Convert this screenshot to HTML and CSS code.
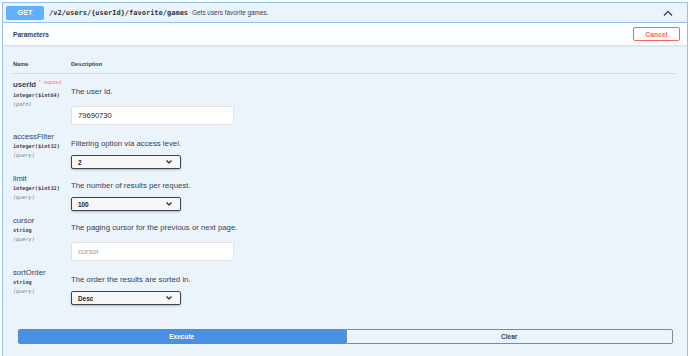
FILE: index.html
```html
<!DOCTYPE html>
<html lang="en">
<head>
    <meta charset="UTF-8">
    <meta name="viewport" content="width=device-width, initial-scale=1.0">
    <title>GET /v2/users/{userId}/favorite/games</title>
    <link rel="stylesheet" href="styles.css">
</head>
<body>
    <div class="opblock">
        <div class="opblock-summary">
            <span class="method">GET</span>
            <span class="path">/v2/users/{userId}/favorite/games</span>
            <span class="summary-desc">Gets users favorite games.</span>
            <svg class="arrow" width="10" height="6" viewBox="0 0 10 6">
                <path d="M1 5.5 L5 1.5 L9 5.5" fill="none" stroke="#3b4151" stroke-width="1.3"/>
            </svg>
        </div>

        <div class="section-header">
            <h4>Parameters</h4>
            <button class="cancel-btn">Cancel</button>
        </div>

        <div class="params">
            <div class="params-head">
                <div class="col-name">Name</div>
                <div class="col-desc">Description</div>
            </div>

            <div class="param-row">
                <div class="col-name">
                    <div class="param-name required">userId<span class="req">*&nbsp; required</span></div>
                    <div class="param-type">integer($int64)</div>
                    <div class="param-in">(path)</div>
                </div>
                <div class="col-desc">
                    <p>The user Id.</p>
                    <input class="text-input" type="text" value="79690730">
                </div>
            </div>

            <div class="param-row">
                <div class="col-name">
                    <div class="param-name">accessFilter</div>
                    <div class="param-type">integer($int32)</div>
                    <div class="param-in">(query)</div>
                </div>
                <div class="col-desc">
                    <p>Filtering option via access level.</p>
                    <div class="select"><span>2</span><svg width="6" height="4" viewBox="0 0 6 4"><path d="M0.5 0.5 L3 3 L5.5 0.5" fill="none" stroke="#222" stroke-width="1.2"/></svg></div>
                </div>
            </div>

            <div class="param-row">
                <div class="col-name">
                    <div class="param-name">limit</div>
                    <div class="param-type">integer($int32)</div>
                    <div class="param-in">(query)</div>
                </div>
                <div class="col-desc">
                    <p>The number of results per request.</p>
                    <div class="select"><span>100</span><svg width="6" height="4" viewBox="0 0 6 4"><path d="M0.5 0.5 L3 3 L5.5 0.5" fill="none" stroke="#222" stroke-width="1.2"/></svg></div>
                </div>
            </div>

            <div class="param-row">
                <div class="col-name">
                    <div class="param-name">cursor</div>
                    <div class="param-type">string</div>
                    <div class="param-in">(query)</div>
                </div>
                <div class="col-desc">
                    <p>The paging cursor for the previous or next page.</p>
                    <input class="text-input" type="text" placeholder="cursor">
                </div>
            </div>

            <div class="param-row">
                <div class="col-name">
                    <div class="param-name">sortOrder</div>
                    <div class="param-type">string</div>
                    <div class="param-in">(query)</div>
                </div>
                <div class="col-desc">
                    <p>The order the results are sorted in.</p>
                    <div class="select"><span>Desc</span><svg width="6" height="4" viewBox="0 0 6 4"><path d="M0.5 0.5 L3 3 L5.5 0.5" fill="none" stroke="#222" stroke-width="1.2"/></svg></div>
                </div>
            </div>
        </div>

        <div class="execute-wrapper">
            <button class="execute-btn">Execute</button>
            <button class="clear-btn">Clear</button>
        </div>
    </div>
</body>
</html>
```

FILE: styles.css
```css
html, body {
    margin: 0;
    height: 100%;
    background-color: #ffffff;
    font-family: "Liberation Sans", Arial, sans-serif;
    color: #3b4151;
}
.opblock {
    margin: 2px 2px 0 2px;
    height: calc(100% - 2px);
    box-sizing: border-box;
    border: 1px solid #8fc3f7;
    border-bottom: none;
    background-color: #ebf3fb;
}
.opblock-summary {
    display: flex;
    align-items: center;
    height: 19px;
    padding: 0 3px;
    border-bottom: 1px solid #8fc3f7;
}
.method {
    width: 38px;
    height: 14px;
    line-height: 14px;
    background-color: #61affe;
    color: #fff;
    font-weight: bold;
    font-size: 7.2px;
    text-align: center;
    border-radius: 2px;
}
.path {
    margin-left: 5px;
    font-family: "DejaVu Sans Mono", monospace;
    font-weight: bold;
    font-size: 7px;
    color: #2f3441;
}
.summary-desc {
    margin-left: 4px;
    font-size: 6.4px;
}
.arrow {
    margin-left: auto;
    margin-right: 11px;
}
.section-header {
    display: flex;
    align-items: center;
    justify-content: space-between;
    height: 22px;
    padding: 0 7px 0 10px;
    background-color: rgba(255, 255, 255, 0.8);
    box-shadow: 0 1px 2px rgba(0, 0, 0, 0.1);
}
.section-header h4 {
    margin: 0;
    font-size: 6.6px;
    font-weight: bold;
}
.cancel-btn {
    width: 47px;
    height: 14px;
    padding: 0;
    background: transparent;
    border: 1.5px solid #ff6060;
    border-radius: 2px;
    color: #ff6060;
    font-family: "Liberation Sans", Arial, sans-serif;
    font-weight: bold;
    font-size: 6.8px;
}
.params {
    margin: 0 11px 0 10px;
    padding-top: 14px;
}
.params-head {
    display: flex;
    font-weight: bold;
    font-size: 5.7px;
    line-height: 10px;
    padding-bottom: 4px;
    border-bottom: 1px solid rgba(59, 65, 81, 0.15);
    margin-bottom: 5px;
}
.col-name {
    width: 58px;
    flex-shrink: 0;
}
.col-desc {
    flex: 1;
}
.param-row {
    display: flex;
}
.param-name {
    font-size: 7.7px;
    line-height: 11px;
}
.param-name.required {
    font-weight: bold;
}
.req {
    position: relative;
    top: -3px;
    margin-left: 3px;
    color: rgba(255, 0, 0, 0.6);
    font-size: 4.8px;
    font-weight: normal;
}
.param-type {
    font-family: "DejaVu Sans Mono", monospace;
    font-weight: bold;
    font-size: 5.2px;
    line-height: 9px;
}
.param-in {
    font-family: "DejaVu Sans Mono", monospace;
    font-style: italic;
    font-size: 5.2px;
    line-height: 9px;
    color: #808080;
}
.col-desc p {
    margin: 8px 0 0 0;
    font-size: 7.8px;
    line-height: 10px;
}
.text-input {
    display: block;
    box-sizing: border-box;
    width: 163px;
    height: 19px;
    margin: 9px 0 6px 0;
    padding: 0 6px;
    background: #fff;
    border: 1px solid #dfe3e8;
    border-radius: 2px;
    font-family: "Liberation Sans", Arial, sans-serif;
    font-size: 7.6px;
    color: #222;
    outline: none;
}
.text-input::placeholder {
    color: #9a9a9a;
}
.select {
    display: flex;
    align-items: center;
    justify-content: space-between;
    box-sizing: border-box;
    width: 110px;
    height: 14px;
    margin: 6px 0 4px 0;
    padding: 0 8px 0 6px;
    background: #f7f7f7;
    border: 1px solid #41444e;
    border-radius: 2px;
    box-shadow: 0 1px 2px rgba(0, 0, 0, 0.25);
    font-weight: bold;
    font-size: 6.4px;
    color: #222;
}
.execute-wrapper {
    display: flex;
    margin: 20px 14px 0 15px;
}
.execute-wrapper button {
    flex: 1;
    height: 15px;
    padding: 0;
    font-family: "Liberation Sans", Arial, sans-serif;
    font-weight: bold;
    font-size: 6.5px;
}
.execute-btn {
    background-color: #4990e2;
    border: 1px solid #4990e2;
    color: #fff;
    border-radius: 2px 0 0 2px;
}
.clear-btn {
    background: transparent;
    border: 1px solid #888;
    color: #3b4151;
    border-radius: 0 2px 2px 0;
}
```
